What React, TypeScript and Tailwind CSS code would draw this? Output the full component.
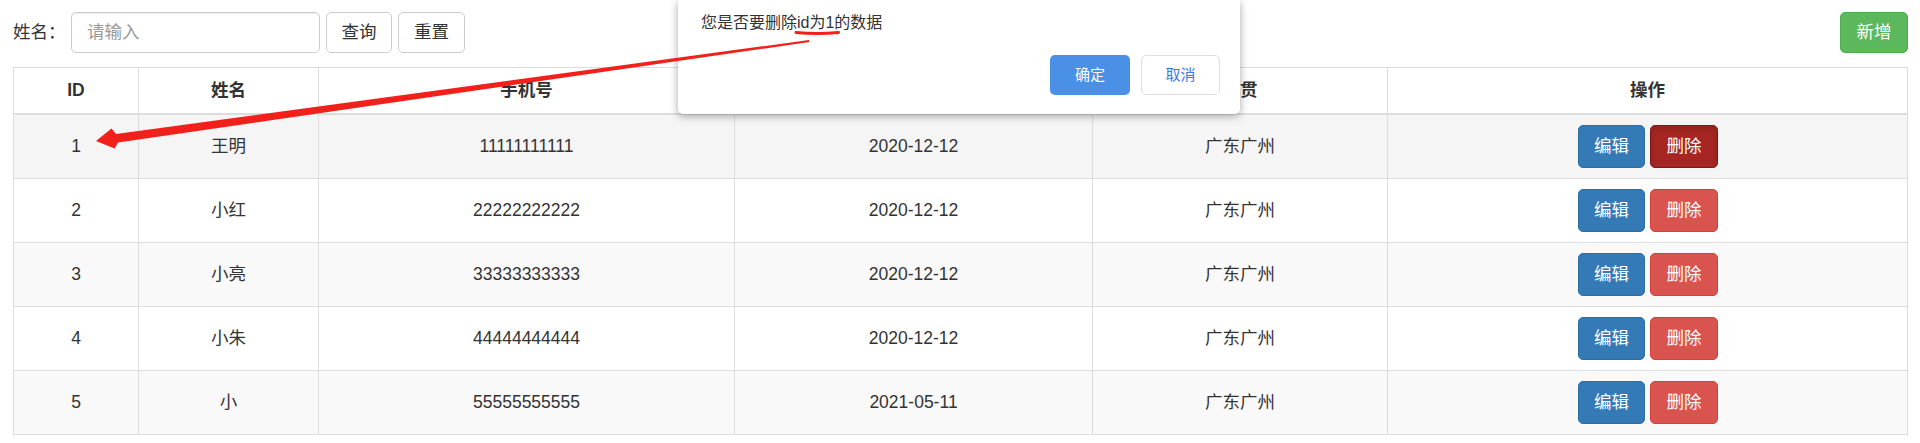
import React from "react";

const rows = [
  { id: 1, name: "王明", phone: "11111111111", date: "2020-12-12", addr: "广东广州" },
  { id: 2, name: "小红", phone: "22222222222", date: "2020-12-12", addr: "广东广州" },
  { id: 3, name: "小亮", phone: "33333333333", date: "2020-12-12", addr: "广东广州" },
  { id: 4, name: "小朱", phone: "44444444444", date: "2020-12-12", addr: "广东广州" },
  { id: 5, name: "小", phone: "55555555555", date: "2021-05-11", addr: "广东广州" },
];

const rowBg = ["bg-[#f5f5f5]", "bg-white", "bg-[#f9f9f9]", "bg-white", "bg-[#f9f9f9]"];

const font = { fontFamily: '"Liberation Sans", "Noto Sans CJK SC", sans-serif' };

function Cell({ children, last, bold }: { children: React.ReactNode; last?: boolean; bold?: boolean }) {
  return (
    <div
      className={
        "flex items-center justify-center " +
        (last ? "" : "border-r border-[#ddd] ") +
        (bold ? "font-bold" : "")
      }
    >
      {children}
    </div>
  );
}

export default function App() {
  return (
    <div
      className="relative w-[1920px] h-[443px] overflow-hidden bg-white text-[#333] text-[17.5px]"
      style={font}
    >
      <div className="pl-[13px] pr-[12px] pt-[12px]">
        {/* Top bar */}
        <div className="flex items-center justify-between h-[41px]">
          <div className="flex items-center h-full">
            <span className="w-[58px] leading-[25px]">姓名：</span>
            <input
              className="w-[249px] h-[41px] border border-[#ccc] rounded-[5px] px-[15px] text-[17.5px] shadow-[inset_0_1px_1px_rgba(0,0,0,0.075)] outline-none placeholder:text-[#999]"
              placeholder="请输入"
              style={font}
            />
            <button className="ml-[6px] w-[66px] h-[41px] border border-[#ccc] rounded-[5px] bg-white text-[#333]">
              查询
            </button>
            <button className="ml-[6px] w-[67px] h-[41px] border border-[#ccc] rounded-[5px] bg-white text-[#333]">
              重置
            </button>
          </div>
          <button className="w-[68px] h-[41px] border border-[#4cae4c] rounded-[5px] bg-[#5cb85c] text-white">
            新增
          </button>
        </div>

        {/* Table */}
        <div className="mt-[14px] border border-[#ddd]">
          <div className="grid grid-cols-[125px_180px_416px_358px_295px_1fr] h-[47px] border-b-2 border-[#ddd]">
            <Cell bold>ID</Cell>
            <Cell bold>姓名</Cell>
            <Cell bold>手机号</Cell>
            <Cell bold>出生日期</Cell>
            <Cell bold>籍贯</Cell>
            <Cell bold last>操作</Cell>
          </div>
          {rows.map((r, i) => (
            <div
              key={r.id}
              className={
                "grid grid-cols-[125px_180px_416px_358px_295px_1fr] " +
                (i < rows.length - 1 ? "h-[64px] border-b border-[#ddd] " : "h-[63px] ") +
                rowBg[i]
              }
            >
              <Cell>{r.id}</Cell>
              <Cell>{r.name}</Cell>
              <Cell>{r.phone}</Cell>
              <Cell>{r.date}</Cell>
              <Cell>{r.addr}</Cell>
              <Cell last>
                <div className="flex gap-[5px] pl-[1px]">
                  <button className="w-[67px] h-[43px] rounded-[5px] border border-[#2e6da4] bg-[#337ab7] text-white">
                    编辑
                  </button>
                  <button
                    className={
                      "w-[68px] h-[43px] rounded-[5px] border text-white " +
                      (i === 0
                        ? "bg-[#a52622] border-[#761c19] shadow-[inset_0_3px_5px_rgba(0,0,0,0.125)]"
                        : "bg-[#d9534f] border-[#d43f3a]")
                    }
                  >
                    删除
                  </button>
                </div>
              </Cell>
            </div>
          ))}
        </div>
      </div>

      {/* Confirm dialog overlay */}
      <div className="absolute left-[678px] top-0 w-[562px] h-[114px] bg-white rounded-b-[5px] shadow-[0_2px_8px_rgba(0,0,0,0.35)] z-10 flex flex-col">
        <div className="pl-[23px] pt-[11px] text-[16px] leading-[24px] text-[#333]">您是否要删除id为1的数据</div>
        <div className="mt-[20px] flex justify-end gap-[11px] pr-[20px]">
          <button className="w-[80px] h-[40px] rounded-[5px] bg-[#4a90e6] text-white text-[15px]">确定</button>
          <button className="w-[79px] h-[40px] rounded-[5px] border border-[#dcdfe6] bg-white text-[#3a7be2] text-[15px]">
            取消
          </button>
        </div>
      </div>

      {/* Annotation arrow */}
      <svg
        className="absolute left-0 top-0 z-20 pointer-events-none"
        width="1920"
        height="443"
        viewBox="0 0 1920 443"
      >
        <path d="M796 32.5 Q817 34.5 838.5 32.5" stroke="#f2201b" strokeWidth="3" strokeLinecap="round" fill="none" />
        <polygon
          fill="#f2201b"
          points="96,141 111.5,128.5 116,134 809,40 809.3,42 118,142.5 114.5,148.5"
        />
      </svg>
    </div>
  );
}
